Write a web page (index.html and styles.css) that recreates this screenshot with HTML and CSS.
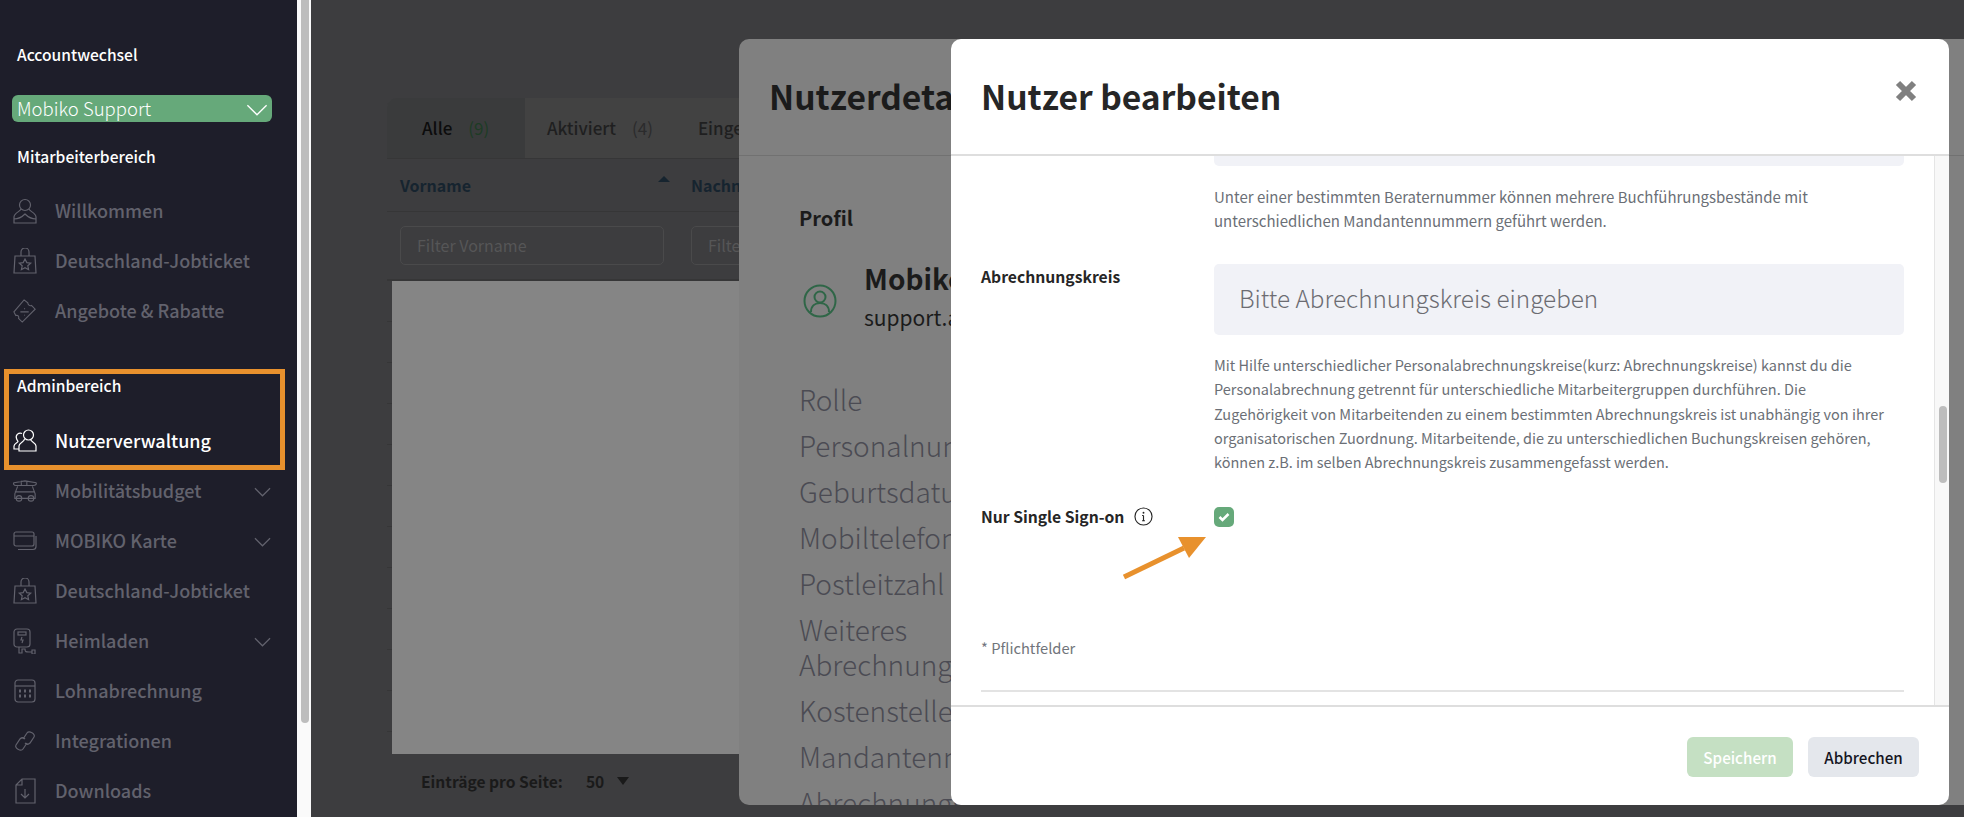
FILE: index.html
```html
<!DOCTYPE html>
<html lang="de">
  <head>
    <title>Nutzerverwaltung</title>
    <meta charset="utf-8" />
    <meta name="viewport" content="width=device-width, initial-scale=1" />
    <link rel="stylesheet" href="styles.css">
  </head>

  <body>
    <svg class="sprite" width="0" height="0">
      <symbol id="i-bag" viewBox="0 0 24 26">
        <path d="M2 8h20l1 17H1z M8 8V4a4 4 0 0 1 8 0v4" />
        <path d="M12 11l1.8 3.6 3.9.5-2.9 2.7.8 3.9-3.6-1.9-3.6 1.9.8-3.9-2.9-2.7 3.9-.5z" />
      </symbol>
    </svg>

    <aside class="sidebar">
      <div class="side-label">Accountwechsel</div>
      <div class="account-select">
        <span>Mobiko Support</span>
        <svg class="chev" viewBox="0 0 18 10"><path d="M1 1l8 8 8-8" /></svg>
      </div>
      <div class="side-label staff">Mitarbeiterbereich</div>

      <nav class="nav staff-nav">
        <a class="nav-item">
          <svg class="nav-icon" viewBox="0 0 24 26"><circle cx="12" cy="7" r="5.5" /><path d="M8 11c0 2-7 4-7 8v6h22v-6c0-4-7-6-7-8 M1 21c4 0 8-2 11-5 3 3 7 5 11 5" /></svg>
          Willkommen
        </a>
        <a class="nav-item">
          <svg class="nav-icon"><use href="#i-bag" /></svg>
          Deutschland-Jobticket
        </a>
        <a class="nav-item">
          <svg class="nav-icon" viewBox="0 0 26 26"><path d="M12 1l4 3c0 2 2 4 4 3l4 4L10 25l-4-4c1-2-1-4-3-3L1 14z" /><path d="M8 14h9 M12.500 10v1 M12.500 17v1" /></svg>
          Angebote &amp; Rabatte
        </a>
      </nav>

      <section class="admin-box">
        <div class="side-label">Adminbereich</div>
        <a class="nav-item active">
          <svg class="nav-icon" viewBox="0 0 24 24"><circle cx="15.500" cy="6" r="5" /><path d="M11.500 10c0 3-5.500 3.500-5.500 7v5h17v-5c0-3.500-5.500-4-5.500-7" /><path d="M9 4.500a4 4 0 0 0-5.500 5c.5 2 1.500 2.500 1.500 3 0 1-4 2-4 4.500v3h5" /></svg>
          Nutzerverwaltung
        </a>
      </section>

      <nav class="nav">
        <a class="nav-item">
          <svg class="nav-icon" viewBox="0 0 26 24"><path d="M1 3l12-2 12 2c1 2-1 3-3 3H3C1 6 0 4 1 3z M9 1v5 M15 1v5" /><path d="M5 7l-3 8v5h22v-5l-3-8 M2 13h21" /><circle cx="6.500" cy="20" r="3" /><circle cx="19.500" cy="20" r="3" /></svg>
          Mobilitätsbudget
          <svg class="chev dim" viewBox="0 0 18 10"><path d="M1 1l8 8 8-8" /></svg>
        </a>
        <a class="nav-item">
          <svg class="nav-icon" viewBox="0 0 24 20"><rect x="1" y="1" width="20" height="14" rx="2" /><path d="M1 5h20 M5 18.500h15a3 3 0 0 0 3-3V5" /></svg>
          MOBIKO Karte
          <svg class="chev dim" viewBox="0 0 18 10"><path d="M1 1l8 8 8-8" /></svg>
        </a>
        <a class="nav-item">
          <svg class="nav-icon"><use href="#i-bag" /></svg>
          Deutschland-Jobticket
        </a>
        <a class="nav-item">
          <svg class="nav-icon" viewBox="0 0 24 26"><rect x="1" y="1" width="16" height="18" rx="3" /><rect x="5" y="4" width="8" height="3" /><path d="M9 9l-1 3h2l-1 3 M6 19v6h3v-4h3c0 3 1 3 4 3h3 M19 22h3v4h-3z" /></svg>
          Heimladen
          <svg class="chev dim" viewBox="0 0 18 10"><path d="M1 1l8 8 8-8" /></svg>
        </a>
        <a class="nav-item">
          <svg class="nav-icon" viewBox="0 0 24 24"><rect x="2" y="1" width="20" height="22" rx="3" /><path d="M2 7h20" /><path d="M6 12h2 M11 12h2 M16 12h2 M6 17h2 M11 17h2 M16 17h2" stroke-width="3" /></svg>
          Lohnabrechnung
        </a>
        <a class="nav-item">
          <svg class="nav-icon" viewBox="0 0 24 24"><path d="M10 10l4-6c2-3 9 1 7 4l-4 6c-1 1-3 2-5 0" /><path d="M14 14l-4 6c-2 3-9-1-7-4l4-6c1-1 3-2 5 0" /></svg>
          Integrationen
        </a>
        <a class="nav-item">
          <svg class="nav-icon" viewBox="0 0 24 26"><path d="M9 1h13v24H3V7z M9 1v6H3" /><path d="M12 11v9 M8 16l4 4 4-4" /></svg>
          Downloads
        </a>
      </nav>
    </aside>

    <div class="side-scroll"><div class="side-thumb"></div></div>

    <main class="main">
      <div class="card">
        <div class="tabs">
          <div class="tab current">Alle <span class="count green">(9)</span></div>
          <div class="tab">Aktiviert <span class="count">(4)</span></div>
          <div class="tab">Eingeladen <span class="count">(5)</span></div>
        </div>
        <div class="grid-head">
          <div class="col">Vorname <i class="sort"></i></div>
          <div class="col">Nachname</div>
        </div>
        <div class="grid-filter">
          <div class="filter">Filter Vorname</div>
          <div class="filter">Filter Nachname</div>
        </div>
        <div class="grid-body">
          <div class="row"></div><div class="row"></div><div class="row"></div><div class="row"></div>
          <div class="row"></div><div class="row"></div><div class="row"></div><div class="row"></div>
          <div class="row"></div><div class="row"></div><div class="row"></div>
          <div class="grid-cover"></div>
        </div>
        <div class="pager">
          <b>Einträge pro Seite:</b>
          <b class="pager-num">50</b>
          <i class="pager-caret"></i>
        </div>
      </div>
    </main>

    <!-- dialog behind, dimmed -->
    <div class="dialog-back">
      <h2>Nutzerdetails</h2>
      <div class="back-body">
        <div class="back-profil">Profil</div>
        <div class="back-user">
          <svg class="user-icon" viewBox="0 0 34 34"><circle cx="17" cy="17" r="15.500" /><circle cx="17" cy="13" r="5.500" /><path d="M8 28c0-6 4-9 9-9s9 3 9 9" /></svg>
          <div>
            <div class="user-name">Mobiko Support</div>
            <div class="user-mail">support.admin@mobiko.de</div>
          </div>
        </div>
        <ul class="back-list">
          <li>Rolle</li>
          <li>Personalnummer</li>
          <li>Geburtsdatum</li>
          <li>Mobiltelefon</li>
          <li>Postleitzahl</li>
          <li>Weiteres<br>Abrechnungsmerkmal</li>
          <li>Kostenstelle</li>
          <li>Mandantennummer</li>
          <li>Abrechnungskreis</li>
        </ul>
      </div>
    </div>

    <!-- edit dialog -->
    <div class="dialog">
      <header class="dialog-head">
        <h2>Nutzer bearbeiten</h2>
        <svg class="close" viewBox="0 0 22 22"><path d="M3 3l16 16 M19 3L3 19" /></svg>
      </header>

      <div class="dialog-body">
        <div class="dialog-scroll">
          <div class="form-row">
            <div></div>
            <div>
              <div class="stub"></div>
              <p class="help first">
                Unter einer bestimmten Beraternummer können mehrere Buchführungsbestände mit
                unterschiedlichen Mandantennummern geführt werden.
              </p>
            </div>
          </div>

          <div class="form-row kreis">
            <label>Abrechnungskreis</label>
            <div>
              <div class="input">Bitte Abrechnungskreis eingeben</div>
              <p class="help long">
                Mit Hilfe unterschiedlicher Personalabrechnungskreise(kurz: Abrechnungskreise) kannst du die
                Personalabrechnung getrennt für unterschiedliche Mitarbeitergruppen durchführen. Die
                Zugehörigkeit von Mitarbeitenden zu einem bestimmten Abrechnungskreis ist unabhängig von ihrer
                organisatorischen Zuordnung. Mitarbeitende, die zu unterschiedlichen Buchungskreisen gehören,
                können z.B. im selben Abrechnungskreis zusammengefasst werden.
              </p>
            </div>
          </div>

          <div class="form-row sso">
            <label>
              Nur Single Sign-on
              <svg class="info" viewBox="0 0 20 20"><circle cx="10" cy="10" r="9" /><path d="M10 9v5.500 M8.500 9H10 M8.500 14.500h3" /><circle class="dot" cx="10" cy="6" r="1" /></svg>
            </label>
            <div class="check">
              <svg viewBox="0 0 12 10"><path d="M1.500 5l3 3 6-6" /></svg>
            </div>
          </div>

          <div class="required">* Pflichtfelder</div>
          <hr class="divider" />
        </div>
        <div class="dialog-track"><div class="dialog-thumb"></div></div>
      </div>

      <footer class="dialog-foot">
        <button class="btn save">Speichern</button>
        <button class="btn cancel">Abbrechen</button>
      </footer>
    </div>

    <!-- screenshot annotation -->
    <svg class="arrow" viewBox="0 0 90 50" width="90" height="50">
      <line x1="2" y1="46" x2="62" y2="17" />
      <polygon points="84,6 56,6 67,27" />
    </svg>
  </body>
</html>
```

FILE: styles.css
```css
* {
  box-sizing: border-box;
}

html,
body {
  margin: 0;
  height: 817px;
  overflow: hidden;
}

body {
  display: flex;
  position: relative;
  font-family: "Noto Sans CJK JP", "Open Sans", sans-serif;
  background: #3d3d3f;
}

.sprite {
  position: absolute;
}

h2 {
  margin: 0;
}

/* sidebar */
.sidebar {
  width: 297px;
  height: 817px;
  flex: none;
  padding-top: 40px;
  background: #1e1e2a;
  overflow: hidden;
}

.side-label {
  height: 30px;
  line-height: 28px;
  padding-left: 17px;
  color: #fff;
  font-size: 15.600px;
  font-weight: 500;
}

.account-select {
  display: flex;
  align-items: center;
  justify-content: space-between;
  width: 260px;
  height: 27px;
  margin: 25px 0 0 12px;
  padding: 0 4px 2px 5px;
  background: #66a97a;
  border-radius: 6px;
  color: #fff;
  font-size: 18.500px;
  font-weight: 300;
}

.chev {
  width: 22px;
  height: 12px;
  margin-top: 4px;
  fill: none;
  stroke: #fff;
  stroke-width: 1.100;
}

.chev.dim {
  width: 17px;
  height: 10px;
  margin-left: auto;
  margin-right: 26px;
  stroke: #62626d;
  stroke-width: 1.300;
}

.side-label.staff {
  margin-top: 20px;
}

.staff-nav {
  margin-top: 14px;
}

.nav-item {
  display: flex;
  align-items: center;
  gap: 18px;
  height: 50px;
  padding-left: 13px;
  padding-bottom: 2px;
  color: #62626d;
  font-size: 18px;
  font-weight: 500;
}

.nav-icon {
  width: 24px;
  height: 26px;
  flex: none;
  margin-top: 2px;
  fill: none;
  stroke: #62626d;
  stroke-width: 1.200;
}

.admin-box {
  width: 281px;
  height: 101px;
  margin: 33px 0 -4px 4px;
  border: 5px solid #e8912d;
}

.admin-box .side-label {
  height: 26px;
  line-height: 23px;
  padding-left: 8px;
}

.admin-box .nav-item {
  height: 49px;
  margin-top: 16px;
  padding-left: 4px;
}

.nav-item.active {
  color: #fff;
}

.nav-item.active .nav-icon {
  stroke: #fff;
}

.side-scroll {
  width: 14px;
  height: 817px;
  flex: none;
  padding: 0 2px 0 4px;
  background: #fafafa;
}

.side-thumb {
  height: 723px;
  background: #bdbdbd;
  border-radius: 0 0 4px 4px;
}

/* page behind the dialogs */
.main {
  flex: 1;
  padding: 98px 0 0 76px;
  overflow: hidden;
}

.card {
  width: 1300px;
  border-radius: 10px 0 0 0;
}

.tabs {
  display: flex;
  height: 61px;
  background: #424242;
  border-bottom: 1px solid #363637;
  border-radius: 10px 0 0 0;
}

.tab {
  display: flex;
  align-items: center;
  gap: 16px;
  padding: 0 23px 2px 22px;
  color: #1f1f20;
  font-size: 17px;
  font-weight: 500;
  white-space: nowrap;
}

.tab.current {
  width: 138px;
  padding-left: 35px;
  background: #3a3b3c;
  color: #0c0c0c;
  border-radius: 10px 0 0 0;
}

.count {
  font-weight: 400;
  color: #2b2b2c;
}

.count.green {
  color: #1d3b25;
}

.grid-head {
  display: flex;
  height: 53px;
  padding-left: 13px;
  border-bottom: 1px solid #363637;
}

.col {
  position: relative;
  width: 291px;
  line-height: 53px;
  color: #16242f;
  font-size: 16px;
  font-weight: 700;
}

.sort {
  position: absolute;
  top: 17px;
  left: 258px;
  border: 6px solid transparent;
  border-top: 0;
  border-bottom-color: #16242f;
}

.grid-filter {
  display: flex;
  gap: 27px;
  height: 69px;
  padding: 14px 0 0 13px;
  border-bottom: 2px solid #363637;
}

.filter {
  width: 264px;
  height: 39px;
  line-height: 37px;
  padding-left: 16px;
  border: 1px solid #4a4a4b;
  border-radius: 5px;
  color: #565657;
  font-size: 16px;
}

.grid-body {
  position: relative;
  height: 473px;
  overflow: hidden;
}

.row {
  height: 41px;
  border-bottom: 1px solid #363637;
}

.grid-cover {
  position: absolute;
  top: 0;
  left: 5px;
  right: 0;
  bottom: 0;
  background: #858585;
}

.pager {
  display: flex;
  align-items: center;
  height: 54px;
  padding-left: 34px;
  color: #1a1a1a;
  font-size: 15.600px;
}

.pager-num {
  margin-left: 23px;
}

.pager-caret {
  margin-left: 13px;
  border: 6.500px solid transparent;
  border-bottom: 0;
  border-top: 8px solid #1a1a1a;
}

/* dimmed dialog */
.dialog-back {
  position: absolute;
  top: 39px;
  left: 739px;
  width: 1300px;
  height: 766px;
  background: #808080;
  border-radius: 10px;
  overflow: hidden;
}

.dialog-back h2 {
  height: 117px;
  padding: 32px 0 0 30px;
  border-bottom: 1px solid #717171;
  color: #1b1b1b;
  font-size: 33.600px;
  line-height: 50px;
  font-weight: 700;
}

.back-body {
  padding: 47px 0 0 60px;
}

.back-profil {
  color: #1b1b1b;
  font-size: 20px;
  font-weight: 700;
  line-height: 30px;
}

.back-user {
  display: flex;
  align-items: center;
  gap: 27px;
  margin: 25px 0 0 4px;
}

.user-icon {
  width: 34px;
  height: 34px;
  margin-top: 9px;
  fill: none;
  stroke: #2f6647;
  stroke-width: 2;
}

.user-name {
  color: #1b1b1b;
  font-size: 28px;
  font-weight: 700;
  line-height: 40px;
}

.user-mail {
  margin-top: 2px;
  color: #1b1b1b;
  font-size: 21px;
  line-height: 34px;
}

.back-list {
  list-style: none;
  margin: 48px 0 0;
  padding: 0;
  color: #4b4b53;
  font-size: 28px;
  font-weight: 300;
  line-height: 35px;
}

.back-list li {
  margin-bottom: 11px;
}

/* edit dialog */
.dialog {
  position: absolute;
  top: 39px;
  left: 951px;
  display: flex;
  flex-direction: column;
  width: 998px;
  height: 766px;
  background: #fff;
  border-radius: 10px;
  overflow: hidden;
}

.dialog-head {
  display: flex;
  align-items: center;
  justify-content: space-between;
  flex: none;
  height: 117px;
  padding: 0 32px 2px 30px;
  border-bottom: 2px solid #dedede;
}

.dialog-head h2 {
  color: #262626;
  font-size: 33.600px;
  font-weight: 700;
}

.close {
  width: 22px;
  height: 22px;
  margin-bottom: 10px;
  fill: none;
  stroke: #808080;
  stroke-width: 6;
}

.dialog-body {
  display: flex;
  flex: 1;
  min-height: 0;
}

.dialog-scroll {
  flex: 1;
  padding-left: 30px;
  overflow: hidden;
}

.dialog-track {
  width: 15px;
  flex: none;
  padding: 250px 2px 0 4px;
  background: #f8f8f8;
  border-left: 1px solid #e5e5e5;
}

.dialog-thumb {
  height: 77px;
  background: #bdbdbd;
  border-radius: 5px;
}

.form-row {
  display: grid;
  grid-template-columns: 233px 690px;
}

.form-row label {
  color: #262626;
  font-size: 15.700px;
  font-weight: 700;
}

.stub {
  height: 10px;
  background: #f1f2f7;
  border-radius: 0 0 5px 5px;
}

.help {
  margin: 18px 0 0;
  color: #6b6f76;
  font-size: 15px;
  line-height: 24.400px;
}

.help.first {
  margin-top: 19px;
}

.help.long {
  max-width: 680px;
  font-size: 14.500px;
}

.kreis {
  margin-top: 30px;
}

.kreis label {
  line-height: 26px;
}

.input {
  height: 71px;
  line-height: 67px;
  padding-left: 25px;
  background: #f1f2f7;
  border-radius: 5px;
  color: #6c6c72;
  font-size: 24.300px;
  font-weight: 300;
}

.sso {
  margin-top: 32px;
}

.sso label {
  display: flex;
  align-items: center;
  gap: 10px;
  height: 20px;
}

.info {
  width: 19px;
  height: 19px;
  fill: none;
  stroke: #262626;
  stroke-width: 1.200;
}

.info .dot {
  fill: #262626;
  stroke: none;
}

.check {
  display: flex;
  align-items: center;
  justify-content: center;
  width: 20px;
  height: 20px;
  background: #66a97a;
  border-radius: 5px;
}

.check svg {
  width: 12px;
  height: 10px;
  fill: none;
  stroke: #fff;
  stroke-width: 2.500;
}

.required {
  margin-top: 109px;
  color: #71757b;
  font-size: 14.700px;
  line-height: 24px;
}

.divider {
  width: 923px;
  margin: 30px 0 0;
  border: 0;
  border-top: 2px solid #e3e3e3;
}

.dialog-foot {
  display: flex;
  justify-content: flex-end;
  gap: 15px;
  flex: none;
  height: 100px;
  padding: 30px 30px 0 0;
  border-top: 2px solid #dedede;
}

.btn {
  height: 40px;
  border: 0;
  border-radius: 6px;
  font-family: inherit;
  font-size: 15.200px;
  font-weight: 500;
}

.btn.save {
  width: 106px;
  background: #c5e0c3;
  color: #fff;
}

.btn.cancel {
  width: 111px;
  background: #e4e7ec;
  color: #15151f;
}

.arrow {
  position: absolute;
  top: 531px;
  left: 1122px;
  fill: #e8912d;
  stroke: #e8912d;
}

.arrow line {
  stroke-width: 5;
}

.arrow polygon {
  stroke: none;
}
```
